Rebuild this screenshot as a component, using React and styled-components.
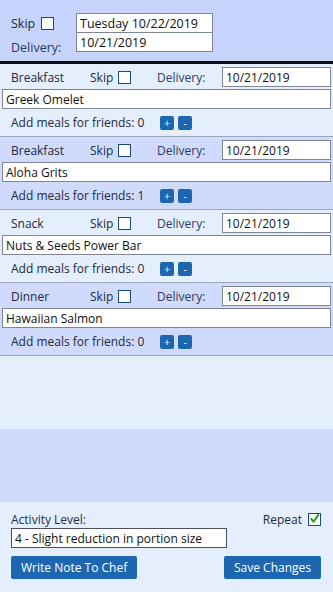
import React from 'react'
import styled, { createGlobalStyle } from 'styled-components'

const GlobalStyle = createGlobalStyle`
  html, body {
    margin: 0;
    padding: 0;
    background: #e4eefd;
    font-family: "Open Sans", "Noto Sans", sans-serif;
    font-size: 12px;
    color: #1f2a44;
  }
`

const Page = styled.div`
  display: flex;
  flex-direction: column;
  height: 592px;
  width: 333px;
  overflow: hidden;
`

const Header = styled.div`
  background: #c6d3fa;
  height: 64px;
  box-sizing: border-box;
  border-bottom: 3px solid #0d0d12;
  padding: 13px 0 0 11px;
  display: grid;
  grid-template-columns: 65px 137px;
  grid-template-rows: 20px 20px;
  font-size: 12.5px;
`

const Label = styled.span`
  display: flex;
  align-items: center;
  gap: 6px;
  white-space: nowrap;
  color: ${p => p.$muted ? '#2c3c62' : '#222a3a'};
  margin-top: ${p => p.$drop || 0}px;
`

const Box = styled.span`
  display: inline-block;
  width: 13px;
  height: 13px;
  box-sizing: border-box;
  border: 1.5px solid #1a4a76;
  background: #fff;
  position: relative;
`

const Check = styled.svg`
  position: absolute;
  left: 0;
  top: -1px;
  width: 11px;
  height: 11px;
`

const Field = styled.div`
  box-sizing: border-box;
  height: 20px;
  background: #fff;
  border: 1px solid #7d8596;
  margin-top: ${p => p.$stack ? '-1px' : '0'};
  padding: 1px 3px 0;
  display: flex;
  align-items: center;
  color: #111;
  white-space: nowrap;
  overflow: hidden;
`

const Meal = styled.div`
  height: 73px;
  box-sizing: border-box;
  background: ${p => p.$alt ? '#cfdafc' : '#e4eefd'};
  border-bottom: 1px solid #9ba6ba;
  padding-top: 3px;
`

const MealRow = styled.div`
  display: flex;
  align-items: center;
  height: 20px;
  padding-left: 11px;
  padding-right: 2px;
`

const Cell = styled.div`
  width: ${p => p.$w}px;
  flex: none;
  display: flex;
  align-items: center;
  gap: 5px;
  color: ${p => p.$muted ? '#2c3c62' : '#222a3a'};
`

const DateField = styled(Field)`
  flex: 1;
`

const NameField = styled(Field)`
  margin: 2px 2px 0;
`

const FriendsRow = styled.div`
  height: 27px;
  display: flex;
  align-items: center;
  padding-left: 11px;
  color: #222a3a;
`

const FriendsText = styled.span`
  width: 149px;
  flex: none;
`

const Tiny = styled.button`
  width: 14px;
  height: 14px;
  padding: 0;
  margin-right: 4px;
  border: none;
  border-radius: 2px;
  background: #1c67b0;
  color: #fff;
  font: 10px/14px "Open Sans", sans-serif;
  text-align: center;
`

const Filler = styled.div`
  height: 73px;
  flex: none;
  background: ${p => p.$alt ? '#cfdafc' : '#e4eefd'};
`

const Footer = styled.div`
  flex: 1;
  background: #e4eefd;
  padding: 8px 12px 0 11px;
  display: flex;
  flex-direction: column;
`

const FooterTop = styled.div`
  display: flex;
  justify-content: space-between;
  align-items: center;
  height: 18px;
`

const Select = styled(Field)`
  width: 216px;
  margin-top: 0px;
  border-color: #4a5060;
`

const Buttons = styled.div`
  display: flex;
  justify-content: space-between;
  margin-top: 8px;
`

const Action = styled.button`
  height: 23px;
  padding: 0 10px;
  border: none;
  border-radius: 2px;
  background: #1c67b0;
  color: #fff;
  font: 12px "Open Sans", sans-serif;
`

const CheckBox = ({ checked }) => (
  <Box>
    {checked && (
      <Check viewBox="0 0 12 12">
        <polyline points="2,6 5,9.5 10.5,1.5" fill="none" stroke="#27a02a" strokeWidth="2.2" />
      </Check>
    )}
  </Box>
)

const meals = [
  { type: 'Breakfast', name: 'Greek Omelet', friends: 0 },
  { type: 'Breakfast', name: 'Aloha Grits', friends: 1 },
  { type: 'Snack', name: 'Nuts & Seeds Power Bar', friends: 0 },
  { type: 'Dinner', name: 'Hawaiian Salmon', friends: 0 },
]

const App = () => (
  <Page>
    <GlobalStyle />
    <Header>
      <Label>Skip <CheckBox /></Label>
      <Field>Tuesday 10/22/2019</Field>
      <Label $muted $drop={9}>Delivery:</Label>
      <Field $stack>10/21/2019</Field>
    </Header>

    {meals.map((m, i) => (
      <Meal key={i} $alt={i % 2 === 1}>
        <MealRow>
          <Cell $w={79}>{m.type}</Cell>
          <Cell $w={67}>Skip <CheckBox /></Cell>
          <Cell $w={65} $muted>Delivery:</Cell>
          <DateField>10/21/2019</DateField>
        </MealRow>
        <NameField>{m.name}</NameField>
        <FriendsRow>
          <FriendsText>Add meals for friends: {m.friends}</FriendsText>
          <Tiny>+</Tiny>
          <Tiny>-</Tiny>
        </FriendsRow>
      </Meal>
    ))}

    <Filler />
    <Filler $alt />

    <Footer>
      <FooterTop>
        <span>Activity Level:</span>
        <Label>Repeat <CheckBox checked /></Label>
      </FooterTop>
      <Select>4 - Slight reduction in portion size</Select>
      <Buttons>
        <Action>Write Note To Chef</Action>
        <Action>Save Changes</Action>
      </Buttons>
    </Footer>
  </Page>
)

export default App
